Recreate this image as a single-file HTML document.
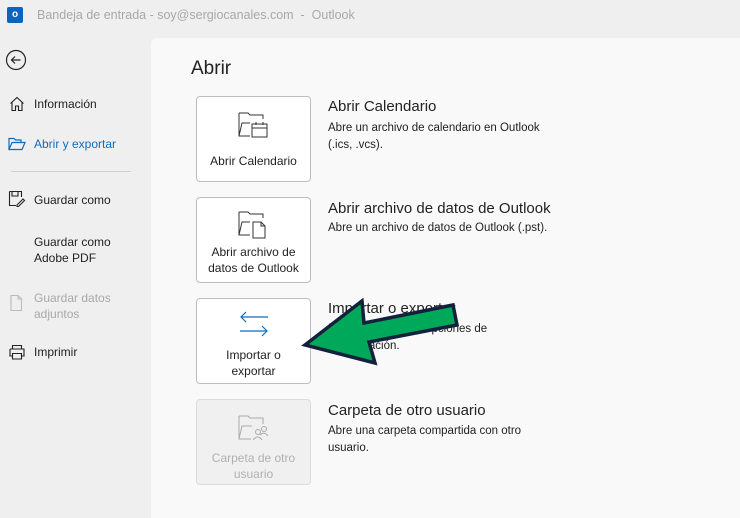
<!DOCTYPE html>
<html><head><meta charset="utf-8"><style>
*{margin:0;padding:0;box-sizing:border-box}
body{width:740px;height:514px;background:#efefef;font-family:"Liberation Sans",sans-serif;position:relative;overflow:hidden;color:#222}
.abs{position:absolute}
.title{left:37px;top:8px;font-size:12.5px;color:#a8a8a8}
.main{left:151px;top:38px;width:600px;height:480px;background:#f9f9f9;border-radius:6px 0 0 0}
.nav{left:34px;font-size:12px;color:#222}
.card{position:absolute;left:196px;width:115px;background:#fff;border:1px solid #bdbdbd;border-radius:4px;text-align:center;font-size:12px;line-height:16px}
.h{position:absolute;left:328px;font-size:15px;color:#222}
.d{position:absolute;left:328px;font-size:11.5px;line-height:17px;color:#222}
</style></head><body>
<div class="abs" style="left:7px;top:7px;width:16px;height:16px;background:#0a64c2;border-radius:2px;color:#fff;font-size:10px;font-weight:bold;text-align:center;line-height:16px">o</div>
<div class="abs title">Bandeja de entrada - soy@sergiocanales.com &nbsp;- &nbsp;Outlook</div>
<div class="abs main"></div>
<svg class="abs" style="left:5px;top:49px" width="22" height="22"><circle cx="11" cy="11" r="9.5" fill="none" stroke="#222" stroke-width="1.2"/><path d="M15.5 11H6.5M10 7.5L6.5 11L10 14.5" fill="none" stroke="#222" stroke-width="1.2"/></svg>
<svg class="abs" style="left:9px;top:96px" width="16" height="16"><path d="M1.5 7.5L8 1.5L14.5 7.5M3 6V14.5H6.5V10H9.5V14.5H13V6" fill="none" stroke="#222" stroke-width="1.1"/></svg>
<div class="abs nav" style="top:97px">Información</div>
<svg class="abs" style="left:8px;top:137px" width="18" height="14"><path d="M1 12.5V1.5H6L7.5 3H13V5.5M1 12.5L4 5.5H17L14 12.5Z" fill="none" stroke="#0f6cbd" stroke-width="1.2"/></svg>
<div class="abs nav" style="top:137px;color:#0f6cbd">Abrir y exportar</div>
<div class="abs" style="left:11px;top:171px;width:120px;height:1px;background:#d0d0d0"></div>
<svg class="abs" style="left:8px;top:190px" width="18" height="18"><path d="M1.5 1.5H13.5V7M1.5 1.5V15.5H8M4 1.5V6H10V1.5M9 15L15 9L16.5 10.5L10.5 16.5H9Z" fill="none" stroke="#222" stroke-width="1.1"/></svg>
<div class="abs nav" style="top:193px">Guardar como</div>
<div class="abs nav" style="top:234px;line-height:16px">Guardar como<br>Adobe PDF</div>
<svg class="abs" style="left:8px;top:294px" width="16" height="18"><path d="M3 1.5H10L13.5 5V16.5H3Z M10 1.5V5H13.5" fill="none" stroke="#bbb" stroke-width="1.1"/></svg>
<div class="abs nav" style="top:290px;line-height:16px;color:#a8a8a8">Guardar datos<br>adjuntos</div>
<svg class="abs" style="left:8px;top:344px" width="18" height="16"><path d="M4.5 5V1.5H13.5V5M2 5H16V12H13.5M4.5 12H2V5M4.5 9.5H13.5V15H4.5Z" fill="none" stroke="#222" stroke-width="1.1"/></svg>
<div class="abs nav" style="top:345px">Imprimir</div>

<div class="abs" style="left:191px;top:58px;font-size:19px;color:#222">Abrir</div>

<div class="card" style="top:96px;height:86px">
<svg style="margin-top:14px" width="34" height="30"><path d="M2 2H11L13 4H26V8M2 2V25H13M2 25L5 12H13" fill="none" stroke="#333" stroke-width="1"/><rect x="15" y="13" width="15" height="13" fill="#fff" stroke="#333"/><path d="M15 17H30M19 11V14M26 11V14" stroke="#333"/></svg>
<div style="margin-top:8px">Abrir Calendario</div></div>
<div class="h" style="top:98px">Abrir Calendario</div>
<div class="d" style="top:120px">Abre un archivo de calendario en Outlook<br>(.ics, .vcs).</div>

<div class="card" style="top:197px;height:86px">
<svg style="margin-top:12px" width="34" height="30"><path d="M2 2H11L13 4H26V8M2 2V25H13M2 25L5 12H13" fill="none" stroke="#333"/><path d="M16 12H24L28 16V28H16Z M24 12V16H28" fill="#fff" stroke="#333"/></svg>
<div style="margin-top:0px">Abrir archivo de<br>datos de Outlook</div></div>
<div class="h" style="top:200px">Abrir archivo de datos de Outlook</div>
<div class="d" style="top:220px">Abre un archivo de datos de Outlook (.pst).</div>

<div class="card" style="top:298px;height:86px">
<svg style="margin-top:12px" width="34" height="28"><path d="M31 6H4M9 1L4 6L9 11M3 20H30M25 15L30 20L25 25" fill="none" stroke="#0f6cbd" stroke-width="1.2"/></svg>
<div style="margin-top:4px">Importar o<br>exportar</div></div>
<div class="h" style="top:300px">Importar o exportar</div>
<div class="d" style="top:321px">Importa archivos y opciones de<br>configuración.</div>

<div class="card" style="top:399px;height:86px;background:#f0f0f0;border-color:#dcdcdc;color:#b0b0b0">
<svg style="margin-top:14px" width="34" height="30"><path d="M2 2H11L13 4H26V10M2 2V25H14M2 25L5 12H15" fill="none" stroke="#aaa"/><circle cx="21" cy="18" r="2.5" fill="none" stroke="#aaa"/><circle cx="27" cy="15" r="2.5" fill="none" stroke="#aaa"/><path d="M16 26Q21 20 25 26M23 21Q27 17 31 22" fill="none" stroke="#aaa"/></svg>
<div style="margin-top:2px">Carpeta de otro<br>usuario</div></div>
<div class="h" style="top:402px">Carpeta de otro usuario</div>
<div class="d" style="top:423px">Abre una carpeta compartida con otro<br>usuario.</div>

<svg class="abs" style="left:0;top:0" width="740" height="514"><polygon points="305,345 362,301 364,323 453,305 457,325 369,342 375,363" fill="#00a85a" stroke="#14213d" stroke-width="3.5" stroke-linejoin="miter"/></svg>
</body></html>
